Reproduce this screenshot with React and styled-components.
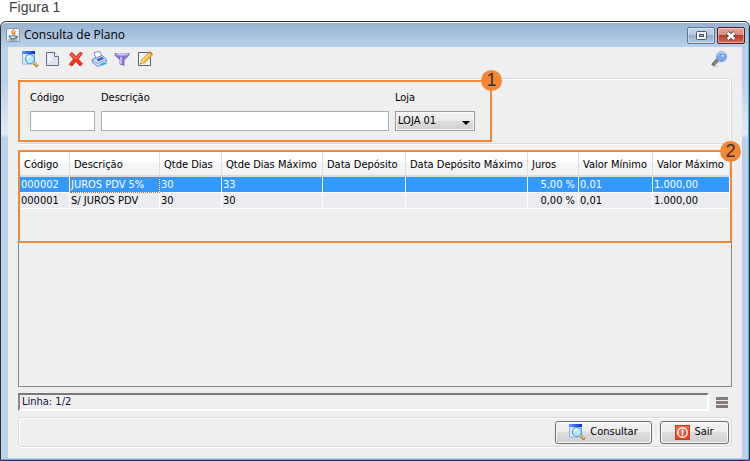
import styled, { createGlobalStyle } from "styled-components";
import { useState } from "react";

const columns = [
  { key: "codigo", title: "Código", width: 50 },
  { key: "descricao", title: "Descrição", width: 90 },
  { key: "dias", title: "Qtde Dias", width: 62 },
  { key: "diasMax", title: "Qtde Dias Máximo", width: 101 },
  { key: "deposito", title: "Data Depósito", width: 83 },
  { key: "depositoMax", title: "Data Depósito Máximo", width: 122 },
  { key: "juros", title: "Juros", width: 51, right: true },
  { key: "minimo", title: "Valor Mínimo", width: 74 },
  { key: "maximo", title: "Valor Máximo", width: 77 },
];

const planos = [
  {
    codigo: "000002",
    descricao: "JUROS PDV 5%",
    dias: "30",
    diasMax: "33",
    juros: "5,00 %",
    minimo: "0,01",
    maximo: "1.000,00",
  },
  {
    codigo: "000001",
    descricao: "S/ JUROS PDV",
    dias: "30",
    diasMax: "30",
    juros: "0,00 %",
    minimo: "0,01",
    maximo: "1.000,00",
  },
];

const SearchIcon = () => (
  <svg width="17" height="17" viewBox="0 0 17 17">
    <defs>
      <linearGradient id="bar">
        <stop offset="0" stopColor="#5c9cf5" />
        <stop offset="1" stopColor="#0631d8" />
      </linearGradient>
    </defs>
    <path d="M0.5 1h12v12h-12z" fill="#dcebfb" stroke="#8fb4e4" />
    <path d="M0 0h13v3H0z" fill="url(#bar)" />
    <path d="M12 12l3.5 3.5" stroke="#a8742a" strokeWidth="3" />
    <path d="M12 11.5l3 3" stroke="#f3c66c" strokeWidth="1.5" />
    <circle cx="8" cy="8" r="4.5" fill="#b4eafa" stroke="#4f94cf" strokeWidth="1.2" />
    <path d="M5.3 8.2a2.8 2.8 0 0 1 2.8-3" stroke="#fff" strokeWidth="1.4" fill="none" />
  </svg>
);

const PageIcon = () => (
  <svg width="16" height="16" viewBox="0 0 16 16">
    <path d="M1.5 1.5h8l4 4v9h-12z" fill="#dde4ef" stroke="#62707f" />
    <path d="M2.5 2.5h5v6l-5 4z" fill="#eef2f8" />
    <path d="M9.5 1.5v4h4" fill="#fff" stroke="#62707f" />
  </svg>
);

const DeleteIcon = () => (
  <svg width="16" height="16" viewBox="0 0 16 16">
    <path
      d="M1.5 3.5L4 1.5l4 4 4-4.2 2.500 1L10.300 8l4.200 5-2.500 2-4.200-4.500L4 15l-2.800-1.600L5.500 8z"
      fill="#f4391d"
      stroke="#c8290f"
      strokeWidth="0.8"
    />
    <path d="M3 3.3l5 4.400 4.500-5" stroke="#ff9278" fill="none" />
  </svg>
);

const PrinterIcon = () => (
  <svg width="17" height="16" viewBox="0 0 17 16">
    <path d="M3 1.5l6-1 2 5-6 3z" fill="#fff" stroke="#7b8fce" />
    <path d="M1 8.5l10-4 4.500 4-.5 4-8.500 3-5-4z" fill="#cfdcf6" stroke="#6b82c4" />
    <path d="M1.5 9l5 3.500L15 9" stroke="#8ca2dc" fill="none" />
    <path d="M5.5 8.5l5.500-2.400 2 1.600-5.500 2.500z" fill="#3860c4" />
    <path d="M8 13l6-2.500 2.500 2.300-6.500 2.700z" fill="#35b3ee" stroke="#dcefff" strokeWidth="0.7" />
  </svg>
);

const FilterIcon = () => (
  <svg width="16" height="16" viewBox="0 0 16 16">
    <path d="M1 2.5h14v1.800L10 9v5.500L6 13V9L1 4.300z" fill="#8f78cf" stroke="#7460b4" strokeWidth="0.8" />
    <ellipse cx="8" cy="3.3" rx="6.5" ry="1.5" fill="#c9bcf0" />
    <path d="M7 6v7" stroke="#d8cdf7" strokeWidth="1.5" />
  </svg>
);

const EditIcon = () => (
  <svg width="16" height="16" viewBox="0 0 16 16">
    <path d="M1.5 1.5h12v13h-12z" fill="#f2f5f8" stroke="#566570" />
    <path d="M3.5 13l1-4L12 1.5 15 4.5 7.5 12z" fill="#f8b52c" stroke="#c98324" strokeWidth="0.7" />
    <path d="M5.5 10L13 2.8" stroke="#ffe58c" strokeWidth="1.2" />
    <path d="M12 1.3l3 3 1-1.200-2.800-2.800z" fill="#df6b43" />
    <path d="M3.3 13.2l1.200-3.500 2.300 2.300z" fill="#f3dcb6" />
    <path d="M3.2 13.3l.5-1.600 1 1z" fill="#444" />
  </svg>
);

const KeyIcon = () => (
  <svg width="16" height="17" viewBox="0 0 16 17">
    <path d="M7.5 8L1.5 14.5" stroke="#66716f" strokeWidth="3.6" />
    <path d="M8 8.5L2 15" stroke="#aab4b0" strokeWidth="1.2" strokeDasharray="1.5 1" />
    <path d="M4 15.7h3" stroke="#c2c2c2" />
    <circle cx="10.5" cy="5.7" r="5" fill="#78a8ef" stroke="#6e9ae4" />
    <path d="M6.5 5a4 4 0 0 1 7-2.2" stroke="#b5d2fc" strokeWidth="1.5" fill="none" />
    <circle cx="11.7" cy="4.8" r="1.6" fill="#e4effe" stroke="#537fc8" strokeWidth="0.7" />
  </svg>
);

const JavaIcon = () => (
  <svg width="14" height="14" viewBox="0 0 13 13">
    <rect x="0.5" y="0.5" width="12" height="12" rx="1" fill="#f4f4f2" stroke="#8c96a2" />
    <path d="M7.5 1.5c-3 2.5-2 3 0 5M9 3c-2 1-1.5 2-.5 3" stroke="#ed7d23" strokeWidth="1.2" fill="none" />
    <path d="M3 7.5h6.500c0 2-1 2.500-3 2.500S3.500 9.500 3 7.500zM9.500 8c2-.5 1.500 1.500-.5 1.500M2.500 11.200h8" stroke="#54728f" fill="none" />
  </svg>
);

const PowerIcon = () => (
  <svg width="15" height="15" viewBox="0 0 15 15">
    <rect x="0.5" y="0.5" width="14" height="14" fill="#e64a26" stroke="#c53a1a" />
    <path d="M1 1h13v5L1 10z" fill="#f06a48" />
    <circle cx="7.5" cy="7.5" r="4.7" fill="none" stroke="#fff" strokeWidth="1.4" />
    <path d="M7.5 4.5v6" stroke="#fff" strokeWidth="1.6" />
  </svg>
);

const MaximizeIcon = () => (
  <svg width="11" height="9" viewBox="0 0 11 9">
    <rect x="0.5" y="0.5" width="10" height="8" rx="1" fill="#f5f5f5" stroke="#4c566c" />
    <rect x="3.5" y="3.5" width="4" height="2" fill="#9fb6d4" stroke="#4c566c" />
  </svg>
);

const CloseIcon = () => (
  <svg width="12" height="10" viewBox="0 0 12 10">
    <path d="M2.5 2l7 6M9.5 2l-7 6" stroke="#4c4656" strokeWidth="4.4" />
    <path d="M2.7 2l6.600 6M9.300 2l-6.600 6" stroke="#fff" strokeWidth="2.4" />
  </svg>
);

const MenuIcon = () => (
  <svg width="12" height="11" viewBox="0 0 12 11">
    <path d="M0 0h12v3H0zM0 4h12v3H0zM0 8h12v3H0z" fill="#857b78" />
  </svg>
);

const tools = [
  { label: "Consultar registros", Icon: SearchIcon },
  { label: "Novo", Icon: PageIcon },
  { label: "Excluir", Icon: DeleteIcon },
  { label: "Imprimir", Icon: PrinterIcon },
  { label: "Filtrar", Icon: FilterIcon },
  { label: "Editar", Icon: EditIcon },
];

const App = () => {
  const [selected, setSelected] = useState(0);

  return (
    <>
      <GlobalStyle />
      <Figure>
        <Caption>Figura 1</Caption>
        <Window>
          <TitleBar>
            <JavaIcon />
            <Title>Consulta de Plano</Title>
            <WindowButton aria-label="Maximizar">
              <MaximizeIcon />
            </WindowButton>
            <WindowButton $close aria-label="Fechar">
              <CloseIcon />
            </WindowButton>
          </TitleBar>
          <Content>
            <Toolbar>
              {tools.map(({ label, Icon }) => (
                <ToolButton key={label} aria-label={label}>
                  <Icon />
                </ToolButton>
              ))}
              <ToolButton $end aria-label="Permissões">
                <KeyIcon />
              </ToolButton>
            </Toolbar>

            <FilterPanel>
              <FilterFields>
                <Field $width={65}>
                  <label htmlFor="codigo">Código</label>
                  <TextInput id="codigo" />
                </Field>
                <Field $width={288}>
                  <label htmlFor="descricao">Descrição</label>
                  <TextInput id="descricao" />
                </Field>
                <Field $width={80}>
                  <label htmlFor="loja">Loja</label>
                  <SelectWrap>
                    <Select id="loja">
                      <option>LOJA 01</option>
                    </Select>
                    <svg width="8" height="4" viewBox="0 0 8 4">
                      <path d="M0 0h8L4 4z" />
                    </svg>
                  </SelectWrap>
                </Field>
                <Highlight />
                <Badge>1</Badge>
              </FilterFields>
            </FilterPanel>

            <ResultPane>
              <TableArea>
                <Table>
                  <colgroup>
                    {columns.map((col) => (
                      <Col key={col.key} $width={col.width} />
                    ))}
                  </colgroup>
                  <thead>
                    <tr>
                      {columns.map((col) => (
                        <Th key={col.key}>{col.title}</Th>
                      ))}
                    </tr>
                  </thead>
                  <tbody>
                    {planos.map((plano, i) => (
                      <Row
                        key={plano.codigo}
                        $selected={selected === i}
                        onClick={() => setSelected(i)}
                      >
                        {columns.map((col) => (
                          <Td
                            key={col.key}
                            $right={col.right}
                            $focused={selected === i && col.key === "descricao"}
                          >
                            {plano[col.key]}
                          </Td>
                        ))}
                      </Row>
                    ))}
                  </tbody>
                </Table>
                <Highlight $outset />
                <Badge>2</Badge>
              </TableArea>
            </ResultPane>

            <StatusRow>
              <Status>
                Linha: {selected + 1}/{planos.length}
              </Status>
              <ToolButton aria-label="Menu">
                <MenuIcon />
              </ToolButton>
            </StatusRow>

            <Footer>
              <ActionButton $width={97}>
                <SearchIcon />
                Consultar
              </ActionButton>
              <ActionButton $width={69}>
                <PowerIcon />
                Sair
              </ActionButton>
            </Footer>
          </Content>
        </Window>
      </Figure>
    </>
  );
};

const GlobalStyle = createGlobalStyle`
  * {
    box-sizing: border-box;
  }
  body {
    margin: 0;
    background: #ffffff;
  }
  body, button, input, select {
    font-family: "DejaVu Sans Condensed", "Noto Sans", sans-serif;
    font-size: 11px;
    line-height: 14px;
    color: #000000;
  }
  svg {
    display: block;
    flex: none;
  }
`;
const Figure = styled.main`
  display: flex;
  flex-direction: column;
  height: 100vh;
`;
const Caption = styled.div`
  height: 21px;
  padding: 0 9px;
  font-family: "Liberation Sans", Arial, sans-serif;
  font-size: 14px;
  line-height: 14px;
  color: #404040;
`;
const Window = styled.section`
  flex: 1;
  min-height: 0;
  display: flex;
  flex-direction: column;
  padding: 0 6px 2px;
  border: 1px solid #2e2e33;
  border-radius: 6px 6px 0 0;
  background: linear-gradient(
    #97b3d1 0,
    #b9d1ea 26px,
    #b9d1ea 60px,
    #dfebf8 112px,
    #b9d1ea 116px
  );
  box-shadow: inset 0 1px #ffffff, inset -1px -1px #35c5e0;
`;
const TitleBar = styled.header`
  display: flex;
  align-items: center;
  height: 25px;
  margin: 0 -2px 0 -1px;
`;
const Title = styled.h1`
  flex: 1;
  margin: 0 4px;
  font-family: "Open Sans", "Noto Sans", sans-serif;
  font-size: 12px;
  line-height: 16px;
  font-weight: 400;
`;
const WindowButton = styled.button`
  display: flex;
  align-items: center;
  justify-content: center;
  width: 28px;
  height: 17px;
  margin: 2px 0 0 2px;
  padding: 0;
  border: 1px solid ${(p) => (p.$close ? "#5c1c22" : "#62788f")};
  border-radius: 2px;
  box-shadow: inset 0 0 0 1px rgba(255, 255, 255, 0.4);
  background: ${(p) =>
    p.$close
      ? "linear-gradient(#e5a59b 0, #d98a7e 48%, #bb3a25 50%, #d4705b)"
      : "linear-gradient(#c3d5e8 0, #b2c9e0 48%, #93afcb 50%, #b3cbe3)"};
`;
const Content = styled.div`
  flex: 1;
  min-height: 0;
  display: flex;
  flex-direction: column;
  margin: 0 1px;
  padding: 0 10px 11px;
  background: #efefef;
`;
const Toolbar = styled.div`
  display: flex;
  align-items: center;
  gap: 7px;
  height: 31px;
  padding: 0 5px 7px 4px;
`;
const ToolButton = styled.button`
  display: flex;
  align-items: center;
  justify-content: center;
  width: 16px;
  height: 18px;
  padding: 0;
  border: 0;
  background: none;
  margin-left: ${(p) => (p.$end ? "auto" : "0")};
`;
const FilterPanel = styled.form`
  display: flex;
  padding: 1px 0 0;
  height: 66px;
  border: 1px solid #d2dce5;
  border-left: 0;
  border-radius: 3px;
  box-shadow: inset -1px 1px #ffffff, 0 1px #ffffff;
`;
const FilterFields = styled.div`
  position: relative;
  display: flex;
  gap: 6px;
  width: 474px;
  height: 62px;
  padding: 11px 12px;
`;
const Field = styled.div`
  display: flex;
  flex-direction: column;
  gap: 6px;
  width: ${(p) => p.$width}px;
  label {
    display: block;
  }
`;
const TextInput = styled.input`
  width: 100%;
  height: 20px;
  padding: 0 3px;
  border: 1px solid #abadb3;
  background: #ffffff;
`;
const SelectWrap = styled.div`
  position: relative;
  svg {
    position: absolute;
    right: 5px;
    top: 10px;
    pointer-events: none;
  }
`;
const Select = styled.select`
  appearance: none;
  display: block;
  width: 100%;
  height: 20px;
  padding: 0 2px;
  border: 1px solid #9a9a9a;
  border-radius: 0;
  background: linear-gradient(#f2f2f2 0, #ebebeb 48%, #dddddd 50%, #d0d0d0);
  box-shadow: inset 0 0 0 1px #f8f8f8;
`;
const Highlight = styled.div`
  position: absolute;
  inset: ${(p) => (p.$outset ? "-1px -1px 0" : "0")};
  border: 2px solid #f58634;
  pointer-events: none;
`;
const Badge = styled.span`
  position: absolute;
  top: -10px;
  right: -10px;
  width: 21px;
  height: 21px;
  border-radius: 50%;
  background: #f58634;
  color: #333333;
  font-family: "Liberation Sans", Arial, sans-serif;
  font-size: 18px;
  line-height: 21px;
  text-align: center;
`;
const ResultPane = styled.div`
  flex: 1;
  min-height: 0;
  margin-top: 6px;
  border: 1px solid #828790;
`;
const TableArea = styled.div`
  position: relative;
  padding: 1px 1px 34px;
`;
const Table = styled.table`
  width: 100%;
  table-layout: fixed;
  border-collapse: separate;
  border-spacing: 0;
`;
const Col = styled.col`
  width: ${(p) => p.$width}px;
`;
const Th = styled.th`
  height: 25px;
  padding: 2px 0 0 4px;
  border-right: 1px solid #dcdddf;
  border-bottom: 2px solid #dadbdc;
  background: linear-gradient(#ffffff 0, #ffffff 45%, #f6f7f8 46%, #f0f1f2);
  font-weight: 400;
  text-align: left;
  white-space: nowrap;
`;
const Row = styled.tr`
  color: ${(p) => (p.$selected ? "#ffffff" : "#000000")};
  background: ${(p) => (p.$selected ? "#3399ff" : "#ebecf0")};
`;
const Td = styled.td`
  height: 16px;
  padding: 0 ${(p) => (p.$right ? "3px" : "0")} 0 1px;
  border-right: 1px solid #ffffff;
  border-bottom: 1px solid #ffffff;
  text-align: ${(p) => (p.$right ? "right" : "left")};
  white-space: nowrap;
  outline: ${(p) => (p.$focused ? "1px dotted #a07850" : "none")};
  outline-offset: -1px;
`;
const StatusRow = styled.div`
  display: flex;
  align-items: center;
  gap: 5px;
  margin-top: 6px;
  padding-right: 2px;
`;
const Status = styled.div`
  flex: 1;
  height: 18px;
  padding: 0 2px;
  border: 2px solid;
  border-color: #7d7878 #ffffff #ffffff #8c8888;
  color: #10103c;
`;
const Footer = styled.footer`
  display: flex;
  justify-content: flex-end;
  align-items: center;
  gap: 8px;
  height: 30px;
  margin-top: 6px;
  padding: 0 2px;
  border: 1px solid #d2dce5;
  border-radius: 3px;
  box-shadow: inset 1px 1px #ffffff, 0 1px #ffffff;
`;
const ActionButton = styled.button`
  display: flex;
  align-items: center;
  justify-content: center;
  gap: 4px;
  width: ${(p) => p.$width}px;
  height: 23px;
  padding: 0;
  border: 1px solid #707070;
  border-radius: 3px;
  background: linear-gradient(#f3f3f3 0, #ececec 48%, #dddddd 50%, #cfcfcf);
  box-shadow: inset 0 0 0 1px #fafafa;
`;

export default App;
